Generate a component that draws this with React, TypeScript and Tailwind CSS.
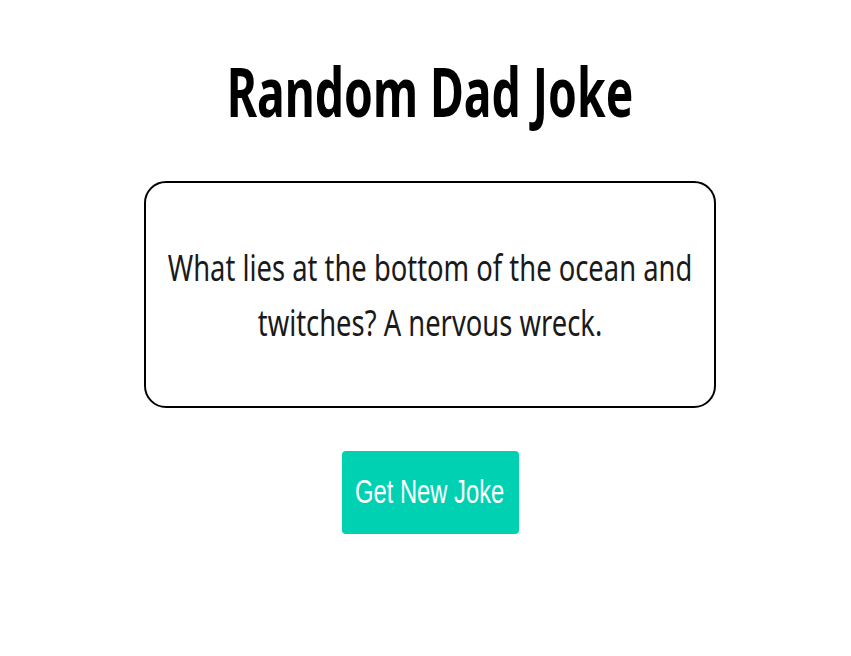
import React from 'react';

export default function App() {
  return (
    <main className="min-h-screen bg-white flex flex-col items-center pl-[9px] pt-[51px]">
      {/* title */}
      <h1 className="text-[68px] leading-[80px] font-bold text-black font-['Noto_Sans',sans-serif] whitespace-nowrap">
        <span className="inline-block scale-x-[0.68]">Random Dad Joke</span>
      </h1>

      {/* joke card */}
      <div className="mt-[50px] w-[572px] h-[227px] border-[2.5px] border-black rounded-[22px] flex items-center justify-center">
        <p className="w-[700px] shrink-0 text-center text-[36px] leading-[55px] text-[#1a1a1a] font-['Noto_Sans',sans-serif] scale-x-[0.76]">
          What lies at the bottom of the ocean and twitches? A nervous wreck.
        </p>
      </div>

      <button className="mt-[43px] w-[177px] h-[83px] pb-[2px] rounded-[4px] bg-[#00d1b2] text-white text-[33px] font-['Liberation_Sans',Arial,sans-serif] flex items-center justify-center">
        <span className="inline-block whitespace-nowrap scale-x-[0.72]">Get New Joke</span>
      </button>
    </main>
  );
}
